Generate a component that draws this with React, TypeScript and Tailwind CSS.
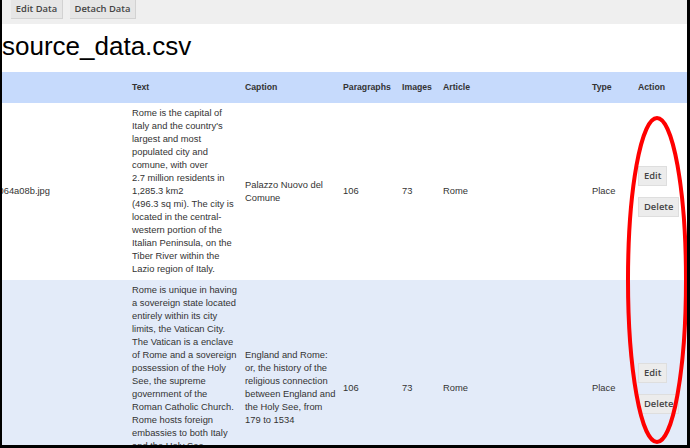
import React from 'react';

const rows = [
  {
    file: '064a08b.jpg',
    text: [
      'Rome is the capital of',
      "Italy and the country's",
      'largest and most',
      'populated city and',
      'comune, with over',
      '2.7 million residents in',
      '1,285.3 km2',
      '(496.3 sq mi). The city is',
      'located in the central-',
      'western portion of the',
      'Italian Peninsula, on the',
      'Tiber River within the',
      'Lazio region of Italy.',
    ],
    caption: ['Palazzo Nuovo del', 'Comune'],
    bg: 'bg-white',
  },
  {
    file: '',
    text: [
      'Rome is unique in having',
      'a sovereign state located',
      'entirely within its city',
      'limits, the Vatican City.',
      'The Vatican is a enclave',
      'of Rome and a sovereign',
      'possession of the Holy',
      'See, the supreme',
      'government of the',
      'Roman Catholic Church.',
      'Rome hosts foreign',
      'embassies to both Italy',
      'and the Holy See.',
      'Rome has also been',
      "called the 'capital of",
      "the world'.",
    ],
    caption: [
      'England and Rome:',
      'or, the history of the',
      'religious connection',
      'between England and',
      'the Holy See, from',
      '179 to 1534',
    ],
    bg: 'bg-[#e3ebf9]',
  },
];

const cols = 'grid grid-cols-[130px_113px_98px_59px_41px_149px_46px_1fr]';

function SmallButton({ label }: { label: string }) {
  return (
    <button className="h-[20px] px-[5px] bg-[#ececec] border border-[#dedede] text-[#444] font-['Open_Sans',sans-serif] font-semibold text-[9.4px] leading-none">
      {label}
    </button>
  );
}

export default function App() {
  return (
    <div className="relative w-[690px] h-[448px] overflow-hidden bg-white border-l-2 border-r-[3px] border-b-[3px] border-black font-['Liberation_Sans',Arial,sans-serif] text-[#333]">
      <div className="h-[24px] bg-[#efefef] flex items-start gap-[7px] pl-[9px]">
        <button className="h-[19px] w-[52px] bg-[#e6e6e6] border-r border-b border-[#d2d2d2] text-[#444] font-['Open_Sans',sans-serif] font-semibold text-[9.4px] leading-none">
          Edit Data
        </button>
        <button className="h-[19px] w-[66px] bg-[#e6e6e6] border-r border-b border-[#d2d2d2] text-[#444] font-['Open_Sans',sans-serif] font-semibold text-[9.4px] leading-none">
          Detach Data
        </button>
      </div>

      <h1 className="mt-[9px] h-[26px] text-[26px] leading-[26px] text-black">source_data.csv</h1>

      <div className={`${cols} mt-[13px] h-[31px] items-center bg-[#c6dafc] text-[8.7px] font-bold`}>
        <div />
        <div>Text</div>
        <div>Caption</div>
        <div>Paragraphs</div>
        <div>Images</div>
        <div>Article</div>
        <div>Type</div>
        <div>Action</div>
      </div>

      {rows.map((r, i) => (
        <div key={i} className={`${cols} items-center py-[4px] text-[9.36px] leading-[13px] ${r.bg}`}>
          <div className="overflow-hidden whitespace-nowrap">
            {r.file && <span className="ml-[-3.5px]">{r.file}</span>}
          </div>
          <div>
            {r.text.map((t, j) => (
              <div key={j} className="whitespace-nowrap">{t}</div>
            ))}
          </div>
          <div>
            {r.caption.map((t, j) => (
              <div key={j} className="whitespace-nowrap">{t}</div>
            ))}
          </div>
          <div>106</div>
          <div>73</div>
          <div>Rome</div>
          <div>Place</div>
          <div className="flex flex-col items-start gap-[11px]">
            <SmallButton label="Edit" />
            <SmallButton label="Delete" />
          </div>
        </div>
      ))}

      <svg className="absolute left-0 top-0 pointer-events-none" width="690" height="448">
        <ellipse cx="655" cy="280" rx="29" ry="162" fill="none" stroke="#ff0000" strokeWidth="4" />
      </svg>
    </div>
  );
}
